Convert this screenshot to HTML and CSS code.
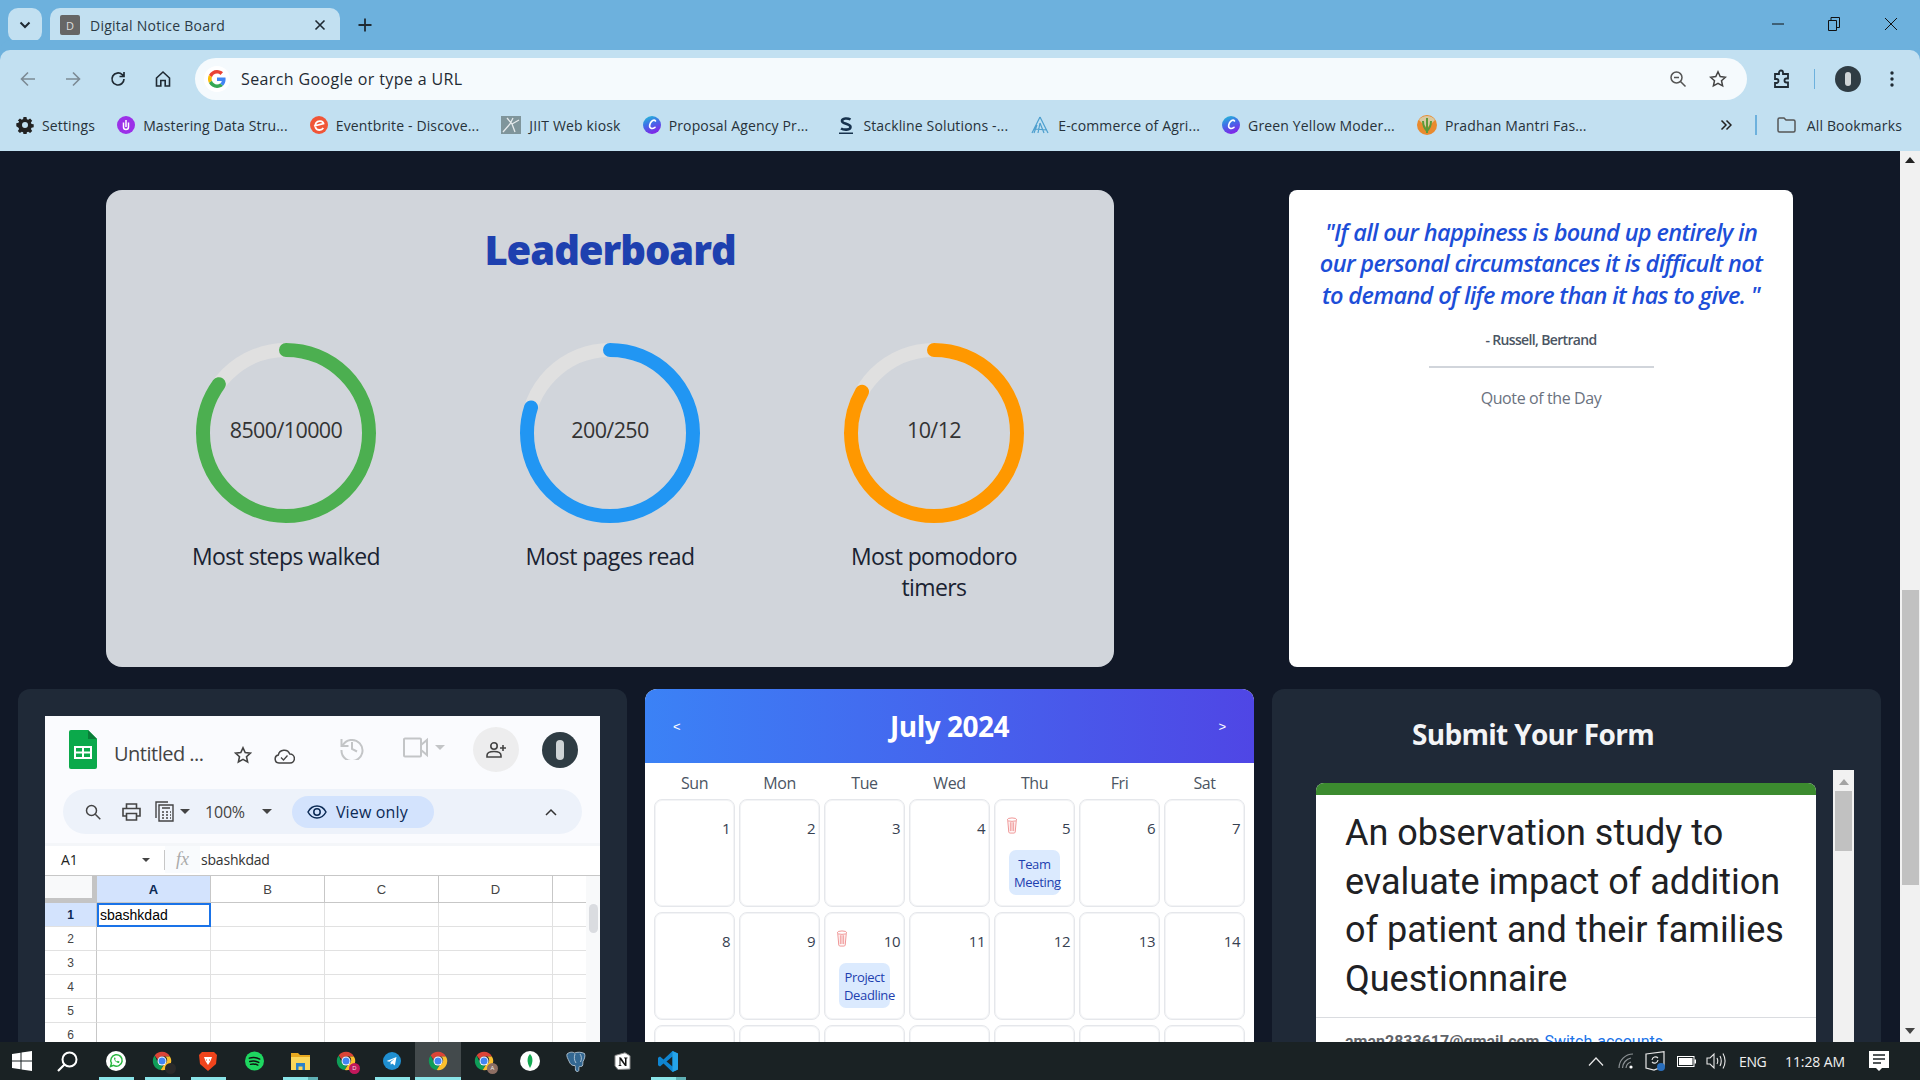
FILE: index.html
```html
<!DOCTYPE html>
<html lang="en">
<head>
<meta charset="utf-8">
<title>Digital Notice Board</title>
<link rel="stylesheet" href="styles.css">
</head>
<body>
<svg class="defs" width="0" height="0" aria-hidden="true">
  <symbol id="chrome" viewBox="0 0 24 24">
    <path fill="#db4437" d="M12 1a11 11 0 0 1 9.5 5.5H12a5.5 5.5 0 0 0-5.2 3.7L3.2 5.4A11 11 0 0 1 12 1z"/>
    <path fill="#0f9d58" d="M3.2 5.4 7.5 15a5.5 5.5 0 0 0 5.9 2.3L10.4 22.9A11 11 0 0 1 3.2 5.4z"/>
    <path fill="#fbc02d" d="M21.5 6.5A11 11 0 0 1 10.4 22.9l4.4-6.9a5.5 5.5 0 0 0 1.2-9.5z"/>
    <circle cx="12" cy="12" r="5.4" fill="#fff"/>
    <circle cx="12" cy="12" r="4.2" fill="#4285f4"/>
  </symbol>
  <symbol id="ccanva" viewBox="0 0 18 18">
    <defs><linearGradient id="cv" x1="0" y1="0" x2="0.4" y2="1"><stop offset="0" stop-color="#1fc7d4"/><stop offset="0.5" stop-color="#3f6fe8"/><stop offset="1" stop-color="#7d2ae8"/></linearGradient></defs>
    <circle cx="9" cy="9" r="9" fill="url(#cv)"/>
    <path d="M12.5 5C11 3 7.500 5 6.700 9c-.6 3.500 2.300 4.500 5.300 2.300" fill="none" stroke="#fff" stroke-width="1.600" stroke-linecap="round"/>
  </symbol>
  <symbol id="trash" viewBox="0 0 12 18">
    <path d="M1.5 3.5 2.6 16a1.4 1.4 0 0 0 1.4 1h4a1.4 1.4 0 0 0 1.4-1l1.1-12.5M1 3a5 2 0 0 1 10 0 5 1.6 0 0 1-10 0zM4.2 5.5v9.5M6 5.5v9.5M7.8 5.5v9.5" fill="none" stroke="#ef8f8f" stroke-width="1"/>
  </symbol>
</svg>

<div class="screen">
  <div class="tabstrip">
    <button class="tab-search" aria-label="Search tabs"><svg width="12" height="8" viewBox="0 0 12 8"><path d="M1.5 1.5 6 6l4.5-4.5" fill="none" stroke="#1f2a33" stroke-width="2"/></svg></button>
    <div class="tab">
      <span class="favicon">D</span>
      <span class="tab-title">Digital Notice Board</span>
      <svg class="tab-close" width="12" height="12" viewBox="0 0 12 12"><path d="M1.5 1.5l9 9m0-9-9 9" stroke="#1f2a33" stroke-width="1.6"/></svg>
    </div>
    <svg class="new-tab" width="14" height="14" viewBox="0 0 14 14"><path d="M7 .5v13M.5 7h13" stroke="#1f2a33" stroke-width="1.8"/></svg>
    <div class="window-controls">
      <svg width="12" height="12" viewBox="0 0 12 12"><path d="M0 6h12" stroke="#111" stroke-width="1"/></svg>
      <svg width="12" height="14" viewBox="0 0 12 14"><path d="M.5 3.5h8v10h-8zM3 3.500V.5h8.500v10H8.500" fill="none" stroke="#111" stroke-width="1"/></svg>
      <svg width="14" height="14" viewBox="0 0 14 14"><path d="M1 1l12 12M13 1 1 13" stroke="#111" stroke-width="1"/></svg>
    </div>
  </div>

  <div class="toolbar">
    <div class="nav-buttons">
      <svg width="18" height="18" viewBox="0 0 18 18"><path d="M16 9H3m6-6.500L2.500 9 9 15.500" fill="none" stroke="#7c8a94" stroke-width="1.600"/></svg>
      <svg width="18" height="18" viewBox="0 0 18 18"><path d="M2 9h13M9 2.500 15.500 9 9 15.500" fill="none" stroke="#7c8a94" stroke-width="1.600"/></svg>
      <svg width="18" height="18" viewBox="0 0 18 18"><path d="M15 9a6 6 0 1 1-1.800-4.300L15 6.500M15 2v4.500h-4.500" fill="none" stroke="#1f2a33" stroke-width="1.700"/></svg>
      <svg width="18" height="18" viewBox="0 0 18 18"><path d="M2.500 8 9 2l6.500 6v8h-4.300v-5.500H6.800V16H2.500z" fill="none" stroke="#1f2a33" stroke-width="1.600"/></svg>
    </div>
    <div class="omnibox">
      <span class="g-badge"><svg width="18" height="18" viewBox="0 0 48 48"><path fill="#ea4335" d="M24 9.500c3.500 0 6.700 1.300 9.200 3.500l6.800-6.800C35.900 2.400 30.400 0 24 0 14.600 0 6.500 5.400 2.600 13.200l7.900 6.100C12.400 13.700 17.700 9.500 24 9.500z"/><path fill="#4285f4" d="M46.900 24.500c0-1.600-.1-3.100-.4-4.500H24v9h12.900c-.6 3-2.200 5.500-4.700 7.200l7.700 6c4.400-4.100 7-10.200 7-17.700z"/><path fill="#fbbc05" d="M10.500 28.700a14.500 14.500 0 0 1 0-9.300l-7.900-6.200a24 24 0 0 0 0 21.600z"/><path fill="#34a853" d="M24 48c6.500 0 11.900-2.100 15.900-5.800l-7.700-6c-2.200 1.400-4.900 2.300-8.200 2.300-6.300 0-11.600-4.200-13.500-9.800l-7.900 6.100C6.500 42.600 14.600 48 24 48z"/></svg></span>
      <span class="omni-text">Search Google or type a URL</span>
      <svg class="omni-zoom" width="18" height="18" viewBox="0 0 18 18"><circle cx="7.500" cy="7.500" r="5.500" fill="none" stroke="#555" stroke-width="1.500"/><path d="M5 7.500h5M11.500 11.500 16.500 16.500" stroke="#555" stroke-width="1.500"/></svg>
      <svg class="omni-star" width="18" height="18" viewBox="0 0 18 18"><path d="m9 1.800 2.200 4.800 5.200.6-3.900 3.500 1.100 5.200L9 13.300l-4.600 2.600 1.100-5.200-3.900-3.500 5.200-.6z" fill="none" stroke="#444" stroke-width="1.500"/></svg>
    </div>
    <div class="toolbar-end">
      <svg class="ext" width="20" height="20" viewBox="0 0 20 20"><path d="M3 5h4V3.500a2 2 0 0 1 4 0V5h5v4.500h-1.500a2 2 0 0 0 0 4H16V18H3v-4h1.500a2 2 0 0 0 0-4H3z" fill="none" stroke="#1f2a33" stroke-width="1.800"/></svg>
      <span class="tb-sep"></span>
      <span class="avatar-btn"><i></i></span>
      <svg class="kebab" width="4" height="16" viewBox="0 0 4 16"><circle cx="2" cy="2" r="1.700" fill="#1f2a33"/><circle cx="2" cy="8" r="1.700" fill="#1f2a33"/><circle cx="2" cy="14" r="1.700" fill="#1f2a33"/></svg>
    </div>
  </div>

  <div class="bookmarks">
    <a class="bm"><svg width="18" height="18" viewBox="0 0 18 18"><path fill="#222" fill-rule="evenodd" d="M7.500 1h3l.4 2.200 1.300.6 1.900-1.200 2.100 2.100-1.300 1.900.6 1.300 2.200.4v3l-2.200.4-.6 1.300 1.300 1.900-2.100 2.100-1.900-1.300-1.300.6-.4 2.200h-3l-.4-2.200-1.300-.6-1.900 1.300-2.100-2.100 1.300-1.900-.6-1.300L.3 10.200v-3l2.200-.4.6-1.300L1.800 4.600l2.100-2.100 1.900 1.200 1.300-.6zM9 6a3 3 0 1 0 0 6 3 3 0 0 0 0-6z"/></svg><span>Settings</span></a>
    <a class="bm"><svg width="18" height="18" viewBox="0 0 18 18"><circle cx="9" cy="9" r="9" fill="#9b30e8"/><path d="M6.500 6.500V11a2.500 2.500 0 0 0 5 0V6.500M9 4v7" fill="none" stroke="#fff" stroke-width="1.500"/></svg><span>Mastering Data Stru...</span></a>
    <a class="bm"><svg width="18" height="18" viewBox="0 0 18 18"><circle cx="9" cy="9" r="9" fill="#f05537"/><path d="M4 10l9.500-2.500C13 4.800 8 4 6 7c-1.800 2.800-.5 7 3.500 7 1.500 0 3-.8 3.800-2" fill="none" stroke="#fff" stroke-width="1.800"/></svg><span>Eventbrite - Discove...</span></a>
    <a class="bm"><svg width="20" height="18" viewBox="0 0 20 18"><rect width="20" height="18" fill="#7f959b"/><path d="M2 16 9 8l3-6M6 2l5 6 7-4M11 8l3 8" fill="none" stroke="#e5eaec" stroke-width="1.300"/></svg><span>JIIT Web kiosk</span></a>
    <a class="bm"><svg width="18" height="18"><use href="#ccanva"/></svg><span>Proposal Agency Pr...</span></a>
    <a class="bm push"><svg width="14" height="18" viewBox="0 0 14 18"><path d="M11.500 3.500C9 2 3 1.800 3 5s8.500 2.500 8.500 6-7 3-9.500 1.500" fill="none" stroke="#17324d" stroke-width="2.600"/><path d="M0 16.500h14V18H0z" fill="#17324d"/></svg><span>Stackline Solutions -...</span></a>
    <a class="bm"><svg width="20" height="18" viewBox="0 0 20 18"><path d="M10 1 2 17M10 1l8 16M7 9l-3 8M10 7l-2 10M10 7l4 10M4 13l13 1" fill="none" stroke="#4d9fce" stroke-width="1.200"/></svg><span>E-commerce of Agri...</span></a>
    <a class="bm"><svg width="18" height="18"><use href="#ccanva"/></svg><span>Green Yellow Moder...</span></a>
    <a class="bm"><svg width="20" height="20" viewBox="0 0 20 20"><circle cx="10" cy="10" r="10" fill="#e98a2e"/><path d="M2 5a10 10 0 0 1 16 0l-8 8z" fill="#d9c9a0"/><path d="M10 3v15M6 6c0 5 2 8 4 10 2-2 4-5 4-10" fill="none" stroke="#5c9a3a" stroke-width="2"/></svg><span>Pradhan Mantri Fas...</span></a>
    <span class="bm-spacer"></span>
    <svg class="bm-more" width="12" height="12" viewBox="0 0 12 12"><path d="m1.500 1.500 4.500 4.500-4.500 4.500M6.500 1.500 11 6l-4.500 4.500" fill="none" stroke="#222" stroke-width="1.500"/></svg>
    <span class="bm-sep"></span>
    <a class="bm all"><svg width="19" height="16" viewBox="0 0 19 16"><path d="M1 2.500a1.500 1.500 0 0 1 1.500-1.500h4.500l2 2h7.500A1.500 1.500 0 0 1 18 4.500V13.500a1.500 1.500 0 0 1-1.500 1.500h-14A1.500 1.500 0 0 1 1 13.500z" fill="none" stroke="#555" stroke-width="1.500"/></svg><span>All Bookmarks</span></a>
  </div>

  <main class="viewport">
    <div class="page">
      <section class="top-row">
        <div class="leaderboard">
          <h2 class="lb-title">Leaderboard</h2>
          <div class="lb-grid">
            <div class="lb-item">
              <div class="ring">
                <svg width="180" height="180" viewBox="0 0 180 180"><circle class="track" cx="90" cy="90" r="83"/><circle class="arc green" cx="90" cy="90" r="83" pathLength="100" style="stroke-dasharray:85 100"/></svg>
                <span class="ring-value">8500/10000</span>
              </div>
              <p class="lb-label">Most steps walked</p>
            </div>
            <div class="lb-item">
              <div class="ring">
                <svg width="180" height="180" viewBox="0 0 180 180"><circle class="track" cx="90" cy="90" r="83"/><circle class="arc blue" cx="90" cy="90" r="83" pathLength="100" style="stroke-dasharray:80 100"/></svg>
                <span class="ring-value">200/250</span>
              </div>
              <p class="lb-label">Most pages read</p>
            </div>
            <div class="lb-item">
              <div class="ring">
                <svg width="180" height="180" viewBox="0 0 180 180"><circle class="track" cx="90" cy="90" r="83"/><circle class="arc orange" cx="90" cy="90" r="83" pathLength="100" style="stroke-dasharray:83.3 100"/></svg>
                <span class="ring-value">10/12</span>
              </div>
              <p class="lb-label">Most pomodoro timers</p>
            </div>
          </div>
        </div>
        <aside class="quote">
          <p class="quote-text">"If all our happiness is bound up entirely in our personal circumstances it is difficult not to demand of life more than it has to give. "</p>
          <p class="quote-author">- Russell, Bertrand</p>
          <hr class="quote-rule">
          <p class="quote-caption">Quote of the Day</p>
        </aside>
      </section>

      <section class="bottom-row">
        <div class="panel sheet-panel">
          <div class="sheet">
            <div class="sheet-head">
              <svg class="sheet-logo" width="28" height="39" viewBox="0 0 28 39"><path d="M2 0h17l9 9v28a2 2 0 0 1-2 2H2a2 2 0 0 1-2-2V2a2 2 0 0 1 2-2z" fill="#0ba94b"/><path d="M19 0l9 9h-9z" fill="#0a7d38"/><path d="M5 16h18v13H5z" fill="#fff"/><path d="M7 18h6v3.500H7zM15 18h6v3.500h-6zM7 23.500h6V27H7zM15 23.500h6V27h-6z" fill="#0ba94b"/></svg>
              <span class="sheet-title">Untitled ...</span>
              <svg class="sh-star" width="18" height="18" viewBox="0 0 18 18"><path d="m9 1.800 2.200 4.800 5.200.6-3.900 3.500 1.100 5.200L9 13.300l-4.600 2.600 1.100-5.200-3.900-3.500 5.200-.6z" fill="none" stroke="#444" stroke-width="1.600"/></svg>
              <svg class="sh-cloud" width="21" height="16" viewBox="0 0 21 16"><path d="M5 15a4 4 0 0 1-.7-7.900A6 6 0 0 1 15.800 6 4.500 4.500 0 0 1 16 15z" fill="none" stroke="#444" stroke-width="1.500"/><path d="m7 9.500 2.500 2.500 4-4.500" fill="none" stroke="#444" stroke-width="1.300"/></svg>
              <svg class="sh-history" width="24" height="24" viewBox="0 0 24 24"><path d="M1.500 3v7h7M2.500 10A10.500 10.500 0 1 1 1.500 14M12 6v7l5 2.500" fill="none" stroke="#c3c5c7" stroke-width="2"/></svg>
              <svg class="sh-video" width="25" height="21" viewBox="0 0 25 21"><path d="M2 1.500h15a1 1 0 0 1 1 1v16a1 1 0 0 1-1 1H2a1 1 0 0 1-1-1v-16a1 1 0 0 1 1-1zM18 8l6-5v15l-6-5" fill="none" stroke="#c3c5c7" stroke-width="2"/></svg>
              <span class="caret faint"></span>
              <span class="sh-share"><svg width="21" height="16" viewBox="0 0 21 16"><circle cx="8" cy="4" r="3.200" fill="none" stroke="#444" stroke-width="1.600"/><path d="M1 15v-1.500C1 11 4 9.500 8 9.500s7 1.500 7 4V15zM17 3v6M14 6h6" fill="none" stroke="#444" stroke-width="1.600"/></svg></span>
              <span class="sh-avatar"><i></i></span>
            </div>
            <div class="sheet-tools">
              <svg class="st-search" width="16" height="16" viewBox="0 0 16 16"><circle cx="6.500" cy="6.500" r="5" fill="none" stroke="#444" stroke-width="1.500"/><path d="m10.300 10.300 5 5" stroke="#444" stroke-width="1.500"/></svg>
              <svg class="st-print" width="19" height="18" viewBox="0 0 19 18"><path d="M4.500 5V1h10v4M4.500 13H1V5.500h17V13h-3.500M4.500 10.500h10V17h-10z" fill="none" stroke="#444" stroke-width="1.600"/></svg>
              <svg class="st-calc" width="19" height="21" viewBox="0 0 19 21"><path d="M1 17V1h12M4 4h14v16H4zM7 7h8M7 11h2M11 11h2M15 11h1M7 14h2M11 14h2M15 14h1M7 17h2M11 17h2M15 17h1" fill="none" stroke="#444" stroke-width="1.400"/></svg>
              <span class="caret st-caret1"></span>
              <span class="st-zoom">100%</span>
              <span class="caret st-caret2"></span>
              <span class="view-only"><svg width="20" height="14" viewBox="0 0 20 14"><path d="M1 7c2-3.800 5-6 9-6s7 2.200 9 6c-2 3.800-5 6-9 6S3 10.800 1 7z" fill="none" stroke="#0b2a55" stroke-width="1.500"/><circle cx="10" cy="7" r="3.200" fill="none" stroke="#0b2a55" stroke-width="1.500"/></svg><span>View only</span></span>
              <svg class="st-chev" width="12" height="8" viewBox="0 0 12 8"><path d="m1 7 5-5 5 5" fill="none" stroke="#333" stroke-width="1.500"/></svg>
            </div>
            <div class="formula">
              <span class="name-box">A1</span>
              <span class="caret fb-caret"></span>
              <span class="fb-sep"></span>
              <span class="fx">fx</span>
              <span class="fb-value">sbashkdad</span>
            </div>
            <div class="grid-wrap">
              <table class="cells">
                <thead><tr><th class="corner"></th><th class="on">A</th><th>B</th><th>C</th><th>D</th><th class="rest"></th></tr></thead>
                <tbody>
                  <tr><th class="on">1</th><td class="sel">sbashkdad</td><td></td><td></td><td></td><td></td></tr>
                  <tr><th>2</th><td></td><td></td><td></td><td></td><td></td></tr>
                  <tr><th>3</th><td></td><td></td><td></td><td></td><td></td></tr>
                  <tr><th>4</th><td></td><td></td><td></td><td></td><td></td></tr>
                  <tr><th>5</th><td></td><td></td><td></td><td></td><td></td></tr>
                  <tr><th>6</th><td></td><td></td><td></td><td></td><td></td></tr>
                </tbody>
              </table>
              <div class="sheet-scroll"><i></i></div>
            </div>
          </div>
        </div>

        <div class="panel calendar">
          <div class="cal-head">
            <span class="cal-nav">&lt;</span>
            <h3 class="cal-title">July 2024</h3>
            <span class="cal-nav">&gt;</span>
          </div>
          <div class="cal-grid weekdays"><span>Sun</span><span>Mon</span><span>Tue</span><span>Wed</span><span>Thu</span><span>Fri</span><span>Sat</span></div>
          <div class="cal-grid days">
            <div class="day"><div class="day-top"><b>1</b></div></div>
            <div class="day"><div class="day-top"><b>2</b></div></div>
            <div class="day"><div class="day-top"><b>3</b></div></div>
            <div class="day"><div class="day-top"><b>4</b></div></div>
            <div class="day"><div class="day-top"><svg class="trash" width="12" height="17"><use href="#trash"/></svg><b>5</b></div><div class="chip">Team Meeting</div></div>
            <div class="day"><div class="day-top"><b>6</b></div></div>
            <div class="day"><div class="day-top"><b>7</b></div></div>
            <div class="day"><div class="day-top"><b>8</b></div></div>
            <div class="day"><div class="day-top"><b>9</b></div></div>
            <div class="day"><div class="day-top"><svg class="trash" width="12" height="17"><use href="#trash"/></svg><b>10</b></div><div class="chip">Project Deadline</div></div>
            <div class="day"><div class="day-top"><b>11</b></div></div>
            <div class="day"><div class="day-top"><b>12</b></div></div>
            <div class="day"><div class="day-top"><b>13</b></div></div>
            <div class="day"><div class="day-top"><b>14</b></div></div>
            <div class="day"></div><div class="day"></div><div class="day"></div><div class="day"></div><div class="day"></div><div class="day"></div><div class="day"></div>
          </div>
        </div>

        <div class="panel form-panel">
          <h3 class="form-title">Submit Your Form</h3>
          <div class="form-frame">
            <div class="form-card">
              <div class="form-band"></div>
              <h1 class="form-heading">An observation study to evaluate impact of addition of patient and their families Questionnaire</h1>
              <p class="form-account"><b>aman2833617@gmail.com</b> <a>Switch accounts</a></p>
            </div>
            <div class="frame-scroll">
              <svg width="10" height="6" viewBox="0 0 10 6"><path d="M5 0l5 6H0z" fill="#a3a3a3"/></svg>
              <i></i>
            </div>
          </div>
        </div>
      </section>
    </div>
    <div class="page-scroll">
      <svg class="ps-up" width="10" height="6" viewBox="0 0 10 6"><path d="M5 0l5 6H0z" fill="#222"/></svg>
      <i></i>
      <svg class="ps-down" width="10" height="6" viewBox="0 0 10 6"><path d="M5 6l5-6H0z" fill="#444"/></svg>
    </div>
  </main>

  <footer class="taskbar">
    <span class="tk-start"><svg width="20" height="20" viewBox="0 0 20 20"><path fill="#fff" d="M0 3l8.500-1.200V9.500H0zM9.500 1.600 20 0v9.500H9.500zM0 10.500h8.500v7.700L0 17zM9.500 10.500H20V20L9.500 18.400z"/></svg></span>
    <span class="tk-search"><svg width="21" height="21" viewBox="0 0 21 21"><circle cx="12.500" cy="8.500" r="7" fill="none" stroke="#fff" stroke-width="2"/><path d="M7.500 13.500 1 20" stroke="#fff" stroke-width="2.200"/></svg></span>
    <span class="tk run"><svg width="20" height="20" viewBox="0 0 20 20"><circle cx="10" cy="10" r="10" fill="#fff"/><path d="M4.500 15.500l1-3.300a5.700 5.700 0 1 1 2.200 2.200z" fill="none" stroke="#2bb741" stroke-width="1.500"/><path d="M8 7c0 2.500 2.500 5 5 5l.5-1.500-1.800-.8-.7.700C10 10 9.500 9.500 9 8.700l.7-.7L9 6.300z" fill="#2bb741"/></svg></span>
    <span class="tk run"><svg width="20" height="20"><use href="#chrome"/></svg><i class="bdg dark"></i></span>
    <span class="tk run"><svg width="18" height="20" viewBox="0 0 18 20"><path d="M3 1h12l3 3-1 9-8 7-8-7-1-9z" fill="#f0441c"/><path d="M5 6h8l-1.500 4L9 14 6.500 10z" fill="#fff"/><path d="M7 9h1M10 9h1" stroke="#f0441c" stroke-width="1"/></svg></span>
    <span class="tk"><svg width="19" height="20" viewBox="0 0 20 20"><circle cx="10" cy="10" r="10" fill="#1ed760"/><path d="M4.500 7c3.500-1 7.500-.8 11 1M5 10.500c3-.8 6.500-.6 9.500 1M5.800 13.500c2.500-.6 5.200-.4 7.700.8" fill="none" stroke="#111" stroke-width="1.500" stroke-linecap="round"/></svg></span>
    <span class="tk run multi"><svg width="19" height="19" viewBox="0 0 19 19"><path d="M0 1h7l2 2h10v3H0z" fill="#e8a91f"/><path d="M0 5h19v13H0z" fill="#fbd75b"/><path d="M5 11h9v7h-2.500v-3.500h-4V18H5z" fill="#2b82c9"/></svg></span>
    <span class="tk"><svg width="20" height="20"><use href="#chrome"/></svg><i class="bdg pink">D</i></span>
    <span class="tk run"><svg width="18" height="20" viewBox="0 0 20 20"><circle cx="10" cy="10" r="10" fill="#1f8fd1"/><path d="M4 10l11-4.500-1.800 9.500-3-2.200-1.500 1.500-.4-3 4.700-4-6 3.400z" fill="#fff"/></svg></span>
    <span class="tk run active"><svg width="20" height="20"><use href="#chrome"/></svg></span>
    <span class="tk"><svg width="20" height="20"><use href="#chrome"/></svg><i class="bdg brown">A</i></span>
    <span class="tk"><svg width="20" height="20" viewBox="0 0 20 20"><circle cx="10" cy="10" r="10" fill="#fff"/><path d="M10 3c3 3 3.500 8 0 14-3.500-6-3-11 0-14z" fill="#13aa52"/></svg></span>
    <span class="tk"><svg width="20" height="21" viewBox="0 0 20 21"><path d="M1 3c3-2.500 6-2 7.500-1 3-1.200 7-1 10 .5 1.200 3-.5 6-1.500 8-.5 2 .5 5-2 5-2 0-2-1-2.200 4-.3 1.500-2.800 1.500-3.300-.5-.3-2 .2-3-.5-4.500C6 15 4 13 3 10 2 8 .2 5 1 3z" fill="#336791" stroke="#c7d6e2" stroke-width=".8"/><path d="M9 3c-1 3-1 6 1 9M14 3c1.500 2 2 5 .5 8" fill="none" stroke="#c7d6e2" stroke-width=".8"/></svg></span>
    <span class="tk"><svg width="17" height="18" viewBox="0 0 17 18"><path d="M1 3.500 11 .8l5 3V17L4 17.500 1 14z" fill="#fff" stroke="#888" stroke-width="1"/><path d="M5 5.500h2l4 6v-5l-1-.3V5.500h3.500v.7l-1 .3V14h-1.500L6.500 8v5l1 .4v.6H4.500v-.6l1-.4V6.300l-.5-.2z" fill="#111"/></svg></span>
    <span class="tk run multi"><svg width="20" height="21" viewBox="0 0 20 21"><path d="M14.500 0 20 2.500v16L14.500 21 5.500 12.500 2 15.500 0 14.200v-7.400l2-1.300 3.500 3z" fill="#0f85d1"/><path d="M14.500 5.500 8.500 10.500l6 5z" fill="#1a2224"/><path d="M14.500 0 20 2.500v16L14.500 21z" fill="#25a4ea"/></svg></span>
    <span class="tk-spacer"></span>
    <div class="tray">
      <svg class="tr-up" width="16" height="9" viewBox="0 0 16 9"><path d="M1 8.500 8 1l7 7.500" fill="none" stroke="#e8e8e8" stroke-width="1.200"/></svg>
      <svg class="tr-wifi" width="16" height="16" viewBox="0 0 16 16"><path d="M1 15A14 14 0 0 1 15 1M4.500 15A10.500 10.500 0 0 1 13 5M8 15a7 7 0 0 1 5-6" fill="none" stroke="#8d9396" stroke-width="1.200"/><circle cx="13" cy="14" r="1.600" fill="#fff"/></svg>
      <span class="tr-sync"><svg width="21" height="20" viewBox="0 0 21 20"><path d="M1 3 19 .7V15l-10 4L1 17z" fill="none" stroke="#e8e8e8" stroke-width="1.200"/><path d="M7 9a3.500 3.500 0 0 1 6-2M13 9a3.500 3.500 0 0 1-6 2" fill="none" stroke="#e8e8e8" stroke-width="1.100"/><circle cx="16" cy="16" r="4" fill="#2a6fbd"/></svg></span>
      <svg class="tr-bat" width="19" height="11" viewBox="0 0 19 11"><rect x=".5" y=".5" width="16.500" height="10" fill="none" stroke="#fff"/><rect x="2" y="2" width="13.500" height="7" fill="#fff"/><rect x="17.500" y="3.500" width="1.500" height="4" fill="#fff"/></svg>
      <svg class="tr-vol" width="20" height="18" viewBox="0 0 20 18"><path d="M1 6h3l4-4v14l-4-4H1z" fill="none" stroke="#e8e8e8" stroke-width="1.100"/><path d="M11 6c1 2 1 4 0 6M14 4c1.500 3 1.500 7 0 10M17 1.500c2.500 4.500 2.500 10.500 0 15" fill="none" stroke="#e8e8e8" stroke-width="1.100"/></svg>
      <span class="tr-lang">ENG</span>
      <span class="tr-time">11:28 AM</span>
      <svg class="tr-note" width="20" height="20" viewBox="0 0 20 20"><path d="M0 0h20v17h-7l-3 3-3-3H0z" fill="#fff"/><path d="M4 4h12M4 8h12M4 12h8" stroke="#1a2224" stroke-width="1.300"/></svg>
    </div>
  </footer>
</div>
</body>
</html>
```

FILE: styles.css
```css
* { box-sizing: border-box; }
html, body { margin: 0; height: 100%; overflow: hidden; }
body { font-family: "Open Sans", "Noto Sans", sans-serif; background: #111827; }
.defs { position: absolute; }
p, h1, h2, h3 { margin: 0; }

.screen { display: flex; flex-direction: column; height: 100vh; }

/* tab strip */
.tabstrip { flex: 0 0 50px; display: flex; align-items: flex-start; background: #6db1dd; padding: 8px 0 0 8px; position: relative; }
.tab-search { width: 34px; height: 34px; border: 0; padding: 0; border-radius: 10px; background: #c2e0f1; display: flex; align-items: center; justify-content: center; }
.tab { width: 290px; height: 42px; margin-left: 8px; background: #c2e0f1; border-radius: 10px 10px 0 0; display: flex; align-items: center; padding: 0 14px 8px 10px; position: relative; }
.tab::before, .tab::after { content: ""; position: absolute; bottom: 0; width: 10px; height: 10px; }
.tab::before { left: -10px; background: radial-gradient(circle at 0 0, #6db1dd 10px, #c2e0f1 10.5px); }
.tab::after { right: -10px; background: radial-gradient(circle at 100% 0, #6db1dd 10px, #c2e0f1 10.5px); }
.favicon { width: 20px; height: 20px; background: #666; color: #ddd; font-size: 11px; border-radius: 2px; display: flex; align-items: center; justify-content: center; }
.tab-title { margin-left: 10px; font-size: 14px; letter-spacing: .25px; color: #2b3a45; flex: 1; }
.new-tab { margin: 10px 0 0 18px; }
.window-controls { margin-left: auto; display: flex; align-items: center; gap: 44px; padding: 9px 22px 0 0; }

/* toolbar */
.toolbar { flex: 0 0 50px; display: flex; align-items: center; background: #c2e0f1; padding-top: 8px; border-radius: 10px 10px 0 0; box-shadow: 0 -10px 0 #6db1dd; position: relative; }
.nav-buttons { display: flex; gap: 27px; padding-left: 19px; width: 195px; }
.omnibox { width: 1552px; height: 42px; border-radius: 21px; background: #f5fafd; display: flex; align-items: center; padding: 0 20px 0 9px; }
.g-badge { width: 26px; height: 26px; border-radius: 50%; background: #fff; display: flex; align-items: center; justify-content: center; }
.omni-text { margin-left: 11px; font-size: 16px; letter-spacing: .37px; color: #1f2a33; flex: 1; }
.omni-zoom { margin-right: 22px; }
.toolbar-end { display: flex; align-items: center; }
.ext { margin-left: 25px; }
.tb-sep { width: 1px; height: 20px; background: #6db1dd; margin-left: 22px; }
.avatar-btn { width: 26px; height: 26px; border-radius: 50%; background: #2f3c44; margin-left: 20px; display: flex; align-items: center; justify-content: center; }
.avatar-btn i { width: 6px; height: 14px; border-radius: 3px; background: #cfd4d6; }
.kebab { margin-left: 29px; }

/* bookmarks */
.bookmarks { flex: 0 0 51px; display: flex; align-items: center; background: #c2e0f1; padding: 0 18px 1px 16px; }
.bm { display: flex; align-items: center; gap: 8px; font-size: 14px; letter-spacing: .15px; color: #27323a; margin-right: 22px; white-space: nowrap; }
.bm.push { margin-left: 9px; gap: 10px; }
.bm-spacer { flex: 1; }
.bm-more { margin-right: 23px; }
.bm-sep { width: 2px; height: 20px; background: #6db1dd; margin-right: 20px; }
.bm.all { margin-right: 0; gap: 11px; }

/* viewport */
.viewport { flex: 1; min-height: 0; display: flex; background: #111827; }
.page { flex: 1; min-width: 0; overflow: hidden; padding-top: 39px; }
.page-scroll { flex: 0 0 20px; background: #f1f1f1; display: flex; flex-direction: column; align-items: center; position: relative; }
.page-scroll i { width: 17px; height: 295px; margin-top: 427px; background: #c1c1c1; display: block; }
.ps-up { margin-top: 6px; flex: none; }
.ps-down { margin-top: auto; margin-bottom: 8px; flex: none; }

.top-row { display: flex; gap: 175px; padding-left: 106px; }
.leaderboard { width: 1008px; height: 477px; background: #d1d5db; border-radius: 16px; padding-top: 33px; }
.lb-title { font-size: 40px; font-weight: 800; line-height: 54px; color: #1e40af; text-align: center; letter-spacing: -1.05px; }
.lb-grid { display: grid; grid-template-columns: repeat(3, 324px); padding: 66px 18px 0; }
.lb-item { display: flex; flex-direction: column; align-items: center; }
.ring { display: grid; width: 180px; height: 180px; place-items: center; }
.ring > * { grid-area: 1 / 1; }
.ring svg { transform: rotate(-90deg); }
.track { fill: none; stroke: #e0e0e0; stroke-width: 14; }
.arc { fill: none; stroke-width: 14; stroke-linecap: round; }
.green { stroke: #4caf50; }
.blue { stroke: #2196f3; }
.orange { stroke: #ff9800; }
.ring-value { font-size: 21.5px; color: #333; letter-spacing: -.6px; margin-top: -8px; }
.lb-label { margin-top: 18px; width: 220px; text-align: center; font-size: 23px; line-height: 31px; font-weight: 500; color: #1a2332; letter-spacing: -.6px; }

.quote { width: 504px; height: 477px; background: #fff; border-radius: 8px; padding: 27px 24px 0; text-align: center; }
.quote-text { font-size: 23.5px; line-height: 31.3px; font-style: italic; font-weight: 600; color: #1d4ed8; letter-spacing: -.65px; }
.quote-author { margin-top: 19px; font-size: 14px; line-height: 20px; font-weight: 600; color: #4b5563; letter-spacing: -.65px; }
.quote-rule { width: 225px; height: 2px; border: 0; background: #d1d5db; margin: 16px auto 0; }
.quote-caption { margin-top: 18px; font-size: 16px; line-height: 24px; color: #6b7280; letter-spacing: -.4px; }

.bottom-row { display: grid; grid-template-columns: repeat(3, 609px); gap: 18px; padding-left: 18px; margin-top: 22px; }
.panel { height: 420px; border-radius: 12px; background: #1f2937; overflow: hidden; }

/* sheet */
.sheet-panel { padding: 27px 27px 0; }
.sheet { width: 555px; background: #fafbfe; height: 393px; overflow: hidden; }
.sheet-head { display: flex; align-items: center; height: 73px; padding: 0 0 6px 24px; }
.sheet-title { margin-left: 17px; margin-top: 7px; font-size: 20px; color: #444; width: 120px; letter-spacing: -.5px; white-space: nowrap; }
.sh-star { margin-top: 10px; }
.sh-cloud { margin-left: 22px; margin-top: 12px; }
.sh-history { margin-left: 45px; margin-top: -4px; }
.sh-video { margin-left: 39px; margin-top: -4px; }
.caret { width: 0; height: 0; border: 5px solid transparent; border-top-color: #444; border-bottom: 0; display: inline-block; flex: none; }
.caret.faint { border-top-color: #c3c5c7; margin-left: 7px; margin-top: -4px; }
.sh-share { width: 46px; height: 45px; border-radius: 50%; background: #ededee; margin-left: 28px; display: flex; align-items: center; justify-content: center; }
.sh-avatar { width: 36px; height: 36px; border-radius: 50%; background: #2f3c44; margin-left: 23px; display: flex; align-items: center; justify-content: center; }
.sh-avatar i { width: 8px; height: 20px; border-radius: 4px; background: #cfd4d6; }
.sheet-tools { margin: 0 18px; height: 45px; border-radius: 23px; background: #edf2fa; display: flex; align-items: center; padding-left: 22px; }
.st-print { margin-left: 21px; }
.st-calc { margin-left: 14px; }
.st-caret1 { margin-left: 6px; }
.st-zoom { margin-left: 15px; font-size: 16px; color: #444; letter-spacing: -.2px; }
.st-caret2 { margin-left: 17px; }
.view-only { margin-left: 20px; width: 142px; height: 32px; border-radius: 16px; background: #d3e3fd; display: flex; align-items: center; gap: 9px; padding-left: 15px; font-size: 16px; font-weight: 500; color: #0b2a55; letter-spacing: .15px; }
.st-chev { margin-left: auto; margin-right: 25px; }
.formula { margin-top: 9px; height: 33px; padding-bottom: 2px; display: flex; align-items: center; border-top: 3px solid #f4f6f9; background: #fff; border-bottom: 1px solid #c7c7c7; }
.name-box { margin-left: 16px; width: 81px; font-size: 14px; color: #222; }
.fb-caret { border-width: 4px; border-bottom: 0; }
.fb-sep { width: 1px; height: 20px; background: #c7c7c7; margin-left: 14px; }
.fx { width: 35px; align-self: stretch; display: flex; align-items: center; justify-content: center; font-family: "Liberation Serif", serif; font-style: italic; font-size: 18px; color: #aaa; background: #f9fbfd; }
.fb-value { font-size: 14px; color: #333; letter-spacing: -.2px; margin-left: 1px; }
.grid-wrap { display: flex; }
.cells { border-collapse: separate; border-spacing: 0; table-layout: fixed; width: 541px; font-family: "Liberation Sans", sans-serif; }
.cells th, .cells td { padding: 0; border-right: 1px solid #e1e1e1; border-bottom: 1px solid #e1e1e1; height: 24px; font-weight: 400; font-size: 12px; color: #444; text-align: center; background: #fff; }
.cells th:first-child { border-right: 1px solid #c7c7c7; }
.cells thead th { width: 114px; height: 27px; border-right: 1px solid #c7c7c7; border-bottom: 1px solid #c7c7c7; font-size: 13px; }
.cells th.on { background: #d3e3fd; color: #0b2a55; font-weight: 700; }
.cells thead th.corner { width: 52px; background: #f8f9fa; border-right: 5px solid #c4c4c4; border-bottom: 5px solid #c4c4c4; }
.cells thead th.rest { width: 33px; background: #fff; border-right: 0; }
.cells td:last-child { border-right: 0; }
.cells td.sel { border: 2px solid #1a73e8; text-align: left; font-size: 14px; color: #000; padding-left: 1px; }
.sheet-scroll { flex: 1; background: #f8f9fa; padding: 28px 2px 0 3px; }
.sheet-scroll i { display: block; height: 29px; border-radius: 5px; background: #dadce0; }

/* calendar */
.calendar { background: #fff; }
.cal-head { height: 74px; background: linear-gradient(90deg, #3b82f6, #4f46e5); display: flex; align-items: center; justify-content: space-between; padding: 0 28px; color: #fff; }
.cal-title { font-size: 28px; font-weight: 700; letter-spacing: -.5px; }
.cal-nav { font-size: 13px; font-family: "Liberation Sans", sans-serif; }
.cal-grid { display: grid; grid-template-columns: repeat(7, 81px); column-gap: 4px; padding: 0 9px; }
.weekdays { height: 36px; align-items: center; text-align: center; font-size: 16px; font-weight: 500; color: #4b5563; letter-spacing: -.4px; padding-top: 4px; }
.days { row-gap: 5px; }
.day { height: 108px; border: 1px solid #e5e7eb; box-shadow: inset 0 0 0 1px #f3f4f6; border-radius: 8px; padding: 18px 4px 0 11px; }
.day-top { display: flex; justify-content: space-between; align-items: flex-start; height: 32px; }
.day-top b { margin-left: auto; font-size: 15px; line-height: 20px; font-weight: 500; color: #374151; letter-spacing: -.5px; }
.trash { margin-top: -1px; }
.chip { width: 51px; margin: 0 0 0 3px; padding: 4.5px 5px; border-radius: 7px; background: #dbeafe; color: #1e40af; font-size: 13px; line-height: 18px; letter-spacing: -.35px; text-align: center; }

/* form */
.form-panel { padding-top: 27px; }
.form-title { font-size: 28px; line-height: 36px; font-weight: 700; color: #f3f4f6; text-align: center; padding-right: 87px; letter-spacing: -.7px; }
.form-frame { display: flex; margin: 18px 0 0 44px; height: 400px; }
.form-card { width: 500px; margin-top: 13px; background: #fff; border-radius: 8px 8px 0 0; overflow: hidden; font-family: Roboto, sans-serif; }
.form-band { height: 12px; background: #3c8b2f; }
.form-heading { padding: 14px 29px 14px 29px; font-size: 36px; line-height: 48.5px; font-weight: 400; color: #202124; border-bottom: 1px solid #dadce0; }
.form-account { padding: 14px 29px 0; font-size: 16px; line-height: 20px; color: #5f6368; word-spacing: 1px; }
.form-account a { color: #1a73e8; }
.frame-scroll { width: 21px; margin-left: 17px; background: #f1f1f1; display: flex; flex-direction: column; align-items: center; padding-top: 9px; }
.frame-scroll i { display: block; width: 17px; height: 60px; margin-top: 6px; background: #c1c1c1; }

/* taskbar */
.taskbar { flex: 0 0 38px; display: flex; align-items: stretch; background: #1a2224; }
.tk-start { width: 44px; display: flex; align-items: center; justify-content: center; }
.tk-search { width: 47px; margin-right: 2px; display: flex; align-items: center; justify-content: center; }
.tk { width: 46px; display: flex; align-items: center; justify-content: center; position: relative; }
.tk.run::after { content: ""; position: absolute; left: 6px; right: 5px; bottom: 0; height: 3px; background: #8ae4e8; }
.tk.multi::before { content: ""; position: absolute; right: 5px; bottom: 0; width: 10px; height: 3px; background: #5fb0b4; z-index: 1; }
.tk.active { background: #434a4c; }
.tk.active::after { left: 0; right: 0; }
.bdg { position: absolute; left: 26px; top: 21px; width: 11px; height: 11px; border-radius: 50%; font-style: normal; font-size: 6px; line-height: 11px; text-align: center; color: #eee; }
.bdg.dark { background: #2b2b2b; }
.bdg.pink { background: #c2185b; }
.bdg.brown { background: #8d6e63; }
.tk-spacer { flex: 1; }
.tray { display: flex; align-items: center; color: #f0f0f0; white-space: nowrap; }
.tr-wifi { margin-left: 14px; }
.tr-sync { margin-left: 11px; display: flex; }
.tr-bat { margin-left: 11px; }
.tr-vol { margin-left: 10px; }
.tr-lang { margin-left: 13px; font-size: 14px; letter-spacing: -.4px; width: 29px; }
.tr-time { margin-left: 17px; font-size: 14px; letter-spacing: -.1px; width: 60px; }
.tr-note { margin-left: 24px; margin-right: 31px; }
```
